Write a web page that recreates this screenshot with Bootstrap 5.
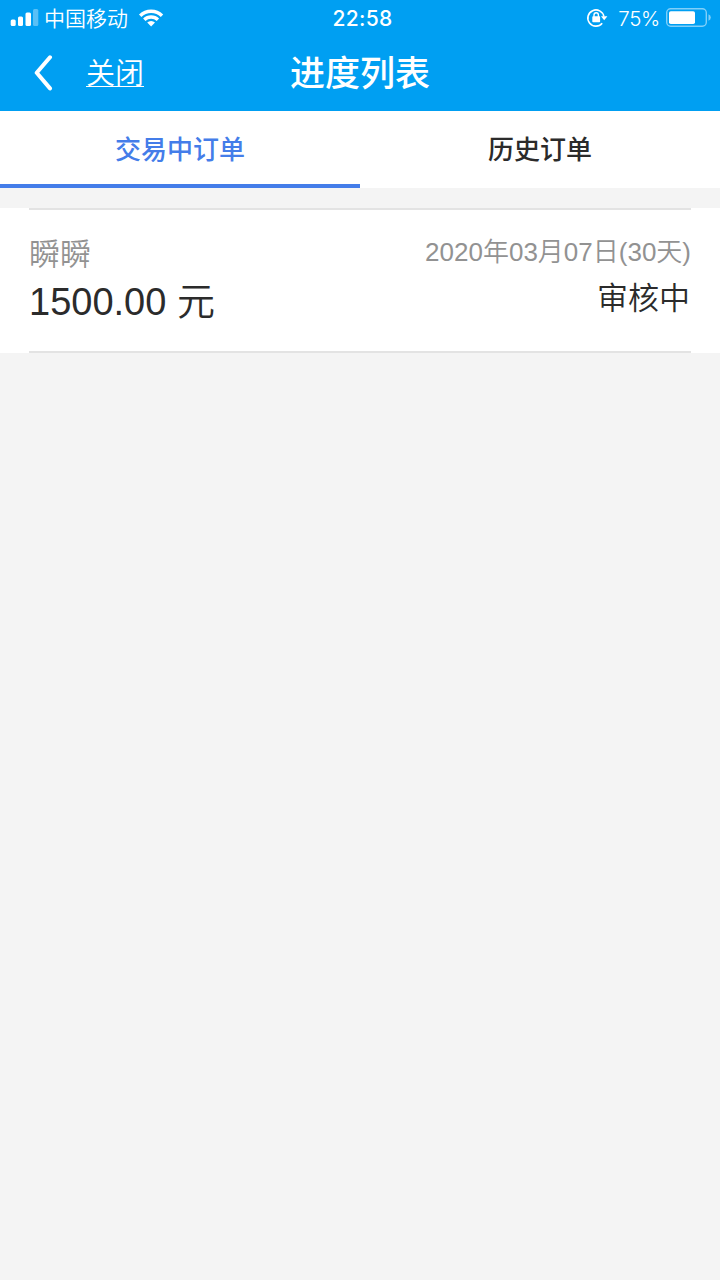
<!DOCTYPE html>
<html lang="zh-CN">
<head>
<meta charset="utf-8">
<meta name="viewport" content="width=device-width, initial-scale=1">
<title>进度列表</title>
<link rel="stylesheet" href="https://cdn.jsdelivr.net/npm/bootstrap@5.3.0/dist/css/bootstrap.min.css">
<style>
body{background:#f4f4f4;font-family:"Liberation Sans","Noto Sans CJK SC",sans-serif;color:#2b2b2b;line-height:1;min-height:1280px}
.app-header{background:#009ff2;height:111px}
.status-bar{height:36px;font-family:Inter,"Noto Sans CJK SC",sans-serif}
.status-side{width:200px;height:36px}
.carrier{font-size:21px;font-weight:350;line-height:38px}
.clock{font-size:21px;font-weight:500;letter-spacing:.3px;line-height:38px;padding-left:5px}
.charge{font-size:20.5px;font-weight:300;line-height:38px;letter-spacing:-.3px}
.title-bar{height:75px}
.title-side{width:200px;padding-left:33px}
.close-link{font-size:29px;font-weight:350;line-height:44px;margin-left:33px;text-decoration:none}
.close-link span{display:block;height:44px}
.close-link::after{content:"";display:block;height:1.5px;background:#fff;margin-top:-10px;margin-bottom:8px}
.page-title{font-size:35px;font-weight:500;line-height:52px}
.order-tabs{height:77px}
.order-tabs .nav-link{height:77px;padding:0;border-radius:0;font-size:26px;font-weight:500;line-height:78px;color:#2b2b2b;border-bottom:4px solid transparent}
.order-tabs .nav-link.active{color:#447de9;border-bottom-color:#447de9}
.order-item{margin-top:20px;height:145px;padding:0 29px}
.order-body{height:145px;border-top:2px solid #e3e3e3;border-bottom:2px solid #e3e3e3}
.order-name{font-size:31px;font-weight:350;color:#929292;line-height:40px;margin-top:25px}
.order-sum{font-size:38px;line-height:52px;margin-top:1px}
.order-date{font-size:26px;color:#929292;line-height:36px;margin-top:24px}
.order-state{font-size:31px;font-weight:350;line-height:44px;margin-top:7px;margin-right:1px}
.order-sum{font-weight:350}
.order-date{font-weight:350}
</style>
</head>
<body>
<header class="app-header text-white">
  <div class="status-bar d-flex justify-content-between">
    <div class="status-side d-flex">
      <svg width="44" height="36" viewBox="0 0 44 36" fill="#fff"><rect x="10.7" y="19.5" width="5" height="6.5" rx="1.5"/><rect x="18" y="16.5" width="5" height="9.5" rx="1.5"/><rect x="25.5" y="12.5" width="5.5" height="13.5" rx="1.5"/><rect x="33" y="9" width="5.3" height="17" rx="1.5" opacity=".35"/></svg>
      <span class="carrier">中国移动</span>
      <svg width="46" height="36" viewBox="0 0 46 36" fill="none" stroke="#fff" stroke-width="3.4"><path d="M12.2 15.7a15.4 15.4 0 0 1 21.8 0M16.3 19.8a9.6 9.6 0 0 1 13.6 0"/><path d="M19.2 22.5a5.5 5.5 0 0 1 7.8 0L23.1 26.4Z" fill="#fff" stroke="none"/></svg>
    </div>
    <div class="clock">22:58</div>
    <div class="status-side d-flex justify-content-end">
      <svg width="32" height="36" viewBox="586 0 32 36" fill="none" stroke="#fff" stroke-width="1.6"><path d="M602.2 23.2a8.1 8.1 0 1 1 1.7-6.7"/><path d="M601 16.3h6.4l-3.2 4z" fill="#fff" stroke="none"/><rect x="592.3" y="16.3" width="7.8" height="5.9" rx=".8" fill="#fff" stroke="none"/><path d="M594 17v-2a2.2 2.2 0 0 1 4.4 0v2" stroke-width="1.4"/></svg>
      <span class="charge">75%</span>
      <svg width="60" height="36" viewBox="660 0 60 36"><rect x="666.7" y="8.7" width="39.6" height="17.6" rx="4" fill="none" stroke="#fff" stroke-opacity=".5" stroke-width="1.4"/><rect x="669" y="11.3" width="26" height="12.7" rx="1.8" fill="#fff"/><path d="M708.5 14.3q2.3.8 2.3 3.2t-2.3 3.2z" fill="#fff" opacity=".5"/></svg>
    </div>
  </div>
  <nav class="title-bar d-flex justify-content-between align-items-center">
    <div class="title-side d-flex align-items-center">
      <svg width="20" height="38" viewBox="0 0 20 38" fill="none" stroke="#fff" stroke-width="4" stroke-linecap="round" stroke-linejoin="round"><path d="M17 2.3 3.7 17.8 17 33.4"/></svg>
      <a class="close-link text-white" href="#"><span>关闭</span></a>
    </div>
    <h1 class="page-title m-0">进度列表</h1>
    <div class="title-side"></div>
  </nav>
</header>
<ul class="nav nav-fill order-tabs bg-white">
  <li class="nav-item w-50"><a class="nav-link active" href="#">交易中订单</a></li>
  <li class="nav-item w-50"><a class="nav-link" href="#">历史订单</a></li>
</ul>
<main>
  <section class="order-item bg-white">
    <div class="order-body d-flex justify-content-between">
      <div>
        <div class="order-name">瞬瞬</div>
        <div class="order-sum">1500.00 元</div>
      </div>
      <div class="text-end">
        <div class="order-date">2020年03月07日(30天)</div>
        <div class="order-state">审核中</div>
      </div>
    </div>
  </section>
</main>
<script src="https://cdn.jsdelivr.net/npm/bootstrap@5.3.0/dist/js/bootstrap.bundle.min.js"></script>
</body>
</html>
